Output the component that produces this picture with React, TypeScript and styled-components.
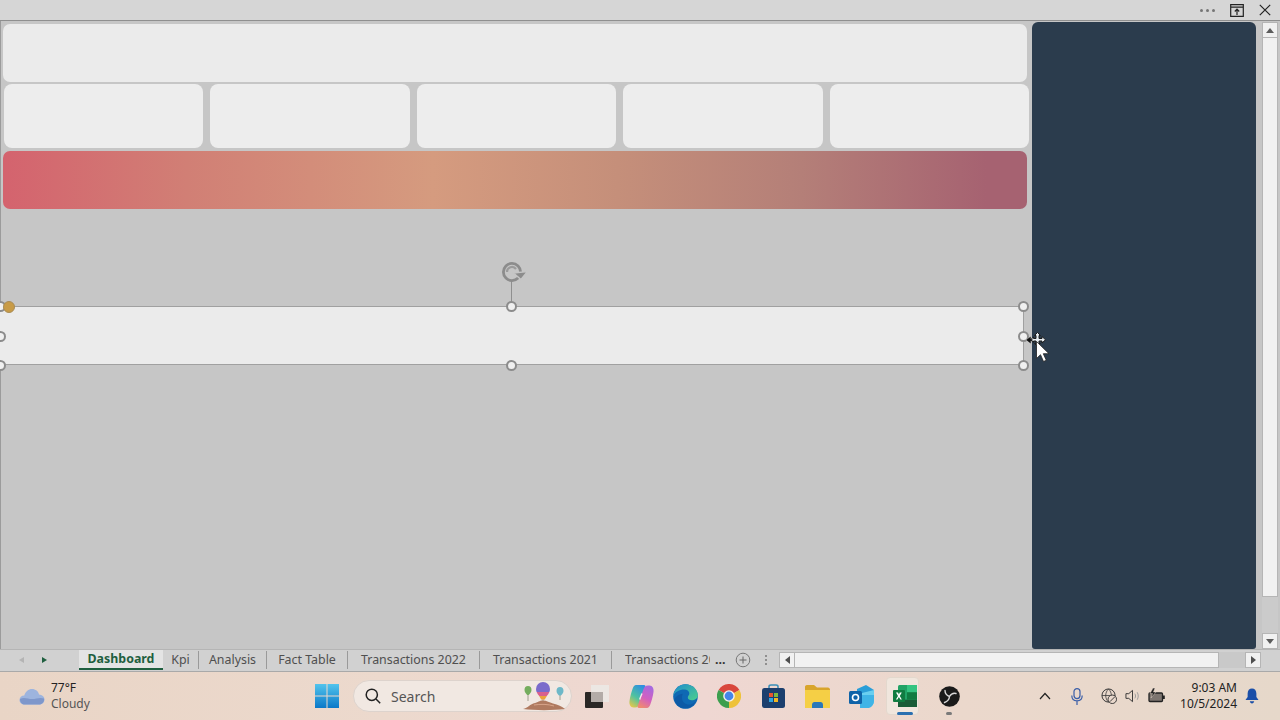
import React from "react";
import styled, { createGlobalStyle } from "styled-components";

const GlobalStyle = createGlobalStyle`
    html, body {
        margin: 0;
        padding: 0;
        background: #c6c6c6;
    }
    body {
        font-family: "Noto Sans", "Open Sans", sans-serif;
        overflow: hidden;
    }
`;

const tabs = [
    { label: "Kpi", width: 36 },
    { label: "Analysis", width: 68 },
    { label: "Fact Table", width: 81 },
    { label: "Transactions 2022", width: 132 },
    { label: "Transactions 2021", width: 132 },
];

const handles = [
    { x: "511px", y: "-2px" },
    { x: "1023px", y: "-2px" },
    { x: "1023px", y: "28px" },
    { x: "1023px", y: "57px" },
    { x: "511px", y: "57px" },
    { x: "0px", y: "28px" },
    { x: "0px", y: "57px" },
    { x: "0px", y: "-2px" },
];

const App: React.FC = (): React.ReactElement => {
    return (
        <Window>
            <GlobalStyle />
            <TitleBar>
                <TitleDots>
                    <i />
                    <i />
                    <i />
                </TitleDots>
                <TitleIcon width="14" height="13" viewBox="0 0 14 13">
                    <path d="M.7.7h12.6v11.6H.7zM.7 3.2h12.6" fill="none" stroke="#222" strokeWidth="1.2" />
                    <path d="M7 11V5.500M4.800 7.500 7 5.200l2.200 2.300" fill="none" stroke="#222" strokeWidth="1.2" />
                </TitleIcon>
                <TitleIcon width="12" height="12" viewBox="0 0 12 12">
                    <path d="M.8.8l10.4 10.4M11.2.8.8 11.2" fill="none" stroke="#222" strokeWidth="1.2" />
                </TitleIcon>
            </TitleBar>
            <Workspace>
                <Canvas>
                    <HeaderCard />
                    <CardRow>
                        <KpiCard />
                        <KpiCard />
                        <KpiCard />
                        <KpiCard />
                        <KpiCard />
                    </CardRow>
                    <Banner />
                    <Selected>
                        <RotateStem />
                        <RotateIcon width="28" height="24" viewBox="0 0 28 24">
                            <circle cx="11" cy="12" r="8.600" fill="none" stroke="#8c8c8c" strokeWidth="2.800" />
                            <path d="M6 12a5 5 0 0 1 9-3" fill="none" stroke="#9b9b9b" strokeWidth="2.200" />
                            <path d="M12.500 13l14-1.500-6.500 8z" fill="#8c8c8c" stroke="#c6c6c6" strokeWidth="1.400" />
                        </RotateIcon>
                        {handles.map((h) => (
                            <Grip key={h.x + h.y} $x={h.x} $y={h.y} />
                        ))}
                        <Adjust />
                    </Selected>
                    <Cursor width="26" height="36" viewBox="0 0 26 36">
                        <path
                            d="M10.500.5l3 3H12v3h3V4.500l3.500 3.300L15 11V9h-3v2.500h1.500l-3 3-3-3H9V9H6.500v1.500l-3-2.700 3-2.800v1.500H9v-3H7.500z"
                            fill="#e8eef2"
                            stroke="#1d1d1d"
                            strokeWidth="1"
                        />
                        <path d="M.5 8h5M.5 8l2.500-2v4z" stroke="#111" strokeWidth="1.400" fill="#111" />
                        <path d="M9.500 9.500v17l4-3.800 3 6.800 2.800-1.200-3-6.600h5.700z" fill="#fff" stroke="#222" strokeWidth=".8" />
                    </Cursor>
                </Canvas>
                <SidePanel />
                <VScroll>
                    <ScrollButton>
                        <UpArrow />
                    </ScrollButton>
                    <VThumb />
                    <VTrack />
                    <ScrollButton>
                        <DownArrow />
                    </ScrollButton>
                </VScroll>
            </Workspace>
            <TabStrip>
                <TabNav>
                    <NavArrow $off />
                    <NavArrow />
                </TabNav>
                <ActiveTab>Dashboard</ActiveTab>
                {tabs.map((tab) => (
                    <Tab key={tab.label} $width={tab.width}>
                        {tab.label}
                    </Tab>
                ))}
                <ClippedTab>
                    <ClippedLabel>Transactions 20</ClippedLabel>
                    <More>...</More>
                </ClippedTab>
                <AddTab width="16" height="16" viewBox="0 0 16 16">
                    <circle cx="8" cy="8" r="6.800" fill="none" stroke="#777" strokeWidth="1" />
                    <path d="M8 4.500v7M4.500 8h7" stroke="#666" strokeWidth="1" />
                </AddTab>
                <Splitter>
                    <i />
                    <i />
                    <i />
                </Splitter>
                <HScroll>
                    <HButton>
                        <LeftArrow />
                    </HButton>
                    <HThumb />
                    <HTrack />
                    <HButton>
                        <RightArrow />
                    </HButton>
                </HScroll>
            </TabStrip>
            <Taskbar>
                <Weather>
                    <svg width="26" height="18" viewBox="0 0 26 18">
                        <path
                            d="M6 17.500C2.500 17.500.5 15.500.5 13c0-2.500 2-4.500 4.800-4.500C6.500 4.500 9.500 2 13 2c3.600 0 6.300 2.300 7 5.500 3 .3 5.500 2.300 5.500 5 0 3-2.500 5-5.500 5z"
                            fill="#9db4de"
                        />
                        <path d="M1 12c4-2.500 8 0 12 0s8-2 12-.5c.6 3.500-2 6-5 6H6c-3 0-5-2-5-5.500z" fill="#7e97cb" />
                    </svg>
                    <WeatherText>
                        <strong>77°F</strong>
                        <span>Cloudy</span>
                    </WeatherText>
                </Weather>
                <StartIcon width="24" height="24" viewBox="0 0 24 24">
                    <defs>
                        <linearGradient id="win" x1="0" y1="0" x2="0" y2="1">
                            <stop offset="0" stopColor="#52c4ec" />
                            <stop offset="1" stopColor="#0a78c8" />
                        </linearGradient>
                    </defs>
                    <path d="M0 0h11.500v11.500H0zM12.500 0H24v11.500H12.500zM0 12.500h11.500V24H0zM12.500 12.500H24V24H12.500z" fill="url(#win)" />
                </StartIcon>
                <SearchBox>
                    <svg width="16" height="16" viewBox="0 0 16 16">
                        <circle cx="6.800" cy="6.800" r="5.600" fill="none" stroke="#222" strokeWidth="1.500" />
                        <path d="M11 11l4.200 4.200" stroke="#222" strokeWidth="1.500" />
                    </svg>
                    <SearchLabel>Search</SearchLabel>
                    <Balloons width="46" height="30" viewBox="0 0 46 30">
                        <path d="M7 12v8M22 15v5M39 13v6" stroke="#8a8a7a" strokeWidth=".8" />
                        <path d="M2 28c5-1 7-5 12-6 3-.6 4-2.500 8-2.500s6 2 10 3c5 1 9 3 12 5.500-12 1.500-30 1.500-42 0z" fill="#b07a60" />
                        <path d="M13 24c6-1 14-1 20 1" fill="none" stroke="#d8a48a" strokeWidth="1" />
                        <path d="M3.500 9a3.500 4 0 0 1 7 0c0 2.500-2 4-2.800 5H6.300c-.8-1-2.800-2.500-2.800-5z" fill="#74ad5e" />
                        <path d="M15 8a7 7 0 0 1 14 0c0 1-.2 2-.6 3H15.600C15.200 10 15 9 15 8z" fill="#7a6bcb" />
                        <path d="M15.600 11h12.800c-.8 2-2 3-2.600 4h-7.600c-.6-1-1.800-2-2.600-4z" fill="#d9608e" />
                        <path d="M18.200 15h7.600l-2 3.500h-3.600z" fill="#eda23c" />
                        <path d="M35.500 10a3.500 4 0 0 1 7 0c0 2.200-1.800 3.500-2.500 4.500h-2c-.7-1-2.500-2.300-2.500-4.500z" fill="#6db8c8" />
                    </Balloons>
                </SearchBox>
                <AppIcons>
                    <AppSlot>
                        <svg width="24" height="23" viewBox="0 0 24 23">
                            <rect x="6" y="0" width="18" height="17" fill="#ece7e3" />
                            <rect x="0" y="7" width="18" height="16" rx="1" fill="#2a2826" />
                            <rect x="6" y="7" width="12" height="10" fill="#b3aca8" />
                        </svg>
                    </AppSlot>
                    <AppSlot>
                        <svg width="25" height="23" viewBox="0 0 25 23">
                            <defs>
                                <linearGradient id="copL" x1="0.700" y1="0" x2="0.200" y2="1">
                                    <stop offset="0" stopColor="#2f8fe0" />
                                    <stop offset=".55" stopColor="#4fc2a0" />
                                    <stop offset="1" stopColor="#e4c84a" />
                                </linearGradient>
                                <linearGradient id="copR" x1="0.700" y1="0" x2="0.300" y2="1">
                                    <stop offset="0" stopColor="#a56ae0" />
                                    <stop offset=".55" stopColor="#d25fc0" />
                                    <stop offset="1" stopColor="#ef8a70" />
                                </linearGradient>
                            </defs>
                            <path d="M7 0h8c1.500 0 1.800 1 1.200 2.500L10.800 18c-.8 2.500-2 4.500-4.800 4.500H4.500C1.500 22.500 0 19.500.5 16 1 12 2.500 7 3.700 3.500 4.500 1.200 5.500 0 7 0z" fill="url(#copL)" />
                            <path d="M18 23h-8c-1.500 0-1.800-1-1.200-2.500L14.200 5c.8-2.500 2-4.500 4.800-4.500h1.500c3 0 4.500 3 4 6.500-.5 4-2 9-3.200 12.500-.8 2.300-1.800 3.500-3.300 3.500z" fill="url(#copR)" />
                            <path d="M13 8.500c-.8 2-1.800 4-2.300 6" stroke="#f5e6ec" strokeWidth="1.400" fill="none" />
                        </svg>
                    </AppSlot>
                    <AppSlot>
                        <svg width="25" height="25" viewBox="0 0 25 25">
                            <defs>
                                <linearGradient id="edgeTop" x1="0" y1="0" x2="1" y2="1">
                                    <stop offset="0" stopColor="#1f8ccf" />
                                    <stop offset="1" stopColor="#4cd08c" />
                                </linearGradient>
                            </defs>
                            <circle cx="12.500" cy="12.500" r="12.300" fill="#0f69b4" />
                            <path d="M.4 11.500C1.500 4.500 6.500.2 12.500.2c7 0 12.300 5 12.300 11 0 3.300-3 5-6 5-2.200 0-4-1-4-2.700 0-1.800 1.500-2.200 1.500-4C16.300 7 14 5.500 11 5.500 6.500 5.500 2 8 .4 11.500z" fill="url(#edgeTop)" />
                            <path d="M9 14c0 3.800 3.200 6.600 7 6.600 2.300 0 4.500-.9 6.500-2.800-1.500 3.500-5 6.400-10 6.400-5.500 0-10-3.500-11-8.500.8-3 4-5.500 8.300-6-.6 1-.8 2.800-.8 4.300z" fill="#0d5aa6" />
                        </svg>
                    </AppSlot>
                    <AppSlot>
                        <svg width="24" height="24" viewBox="0 0 24 24">
                            <path d="M12 12 1.600 6A12 12 0 0 1 22.400 6z" fill="#d9473c" />
                            <path d="M12 12 1.600 6A12 12 0 0 0 12 24z" fill="#3c9f4e" />
                            <path d="M12 12 12 24A12 12 0 0 0 22.400 6z" fill="#eec23a" />
                            <circle cx="12" cy="12" r="5.800" fill="#f6f2ee" />
                            <circle cx="12" cy="12" r="4.400" fill="#4586e8" />
                        </svg>
                    </AppSlot>
                    <AppSlot>
                        <svg width="25" height="24" viewBox="0 0 25 24">
                            <path d="M8 4V2.500C8 1.500 9 1 10 1h5c1 0 2 .5 2 1.500V4" fill="none" stroke="#3a8fb8" strokeWidth="1.500" />
                            <rect x="1" y="4" width="23" height="20" rx="2.500" fill="#1c3f6e" />
                            <path d="M8 9h4v4H8z" fill="#e8552f" />
                            <path d="M13 9h4v4h-4z" fill="#7db93d" />
                            <path d="M8 14h4v4H8z" fill="#2fa6e0" />
                            <path d="M13 14h4v4h-4z" fill="#f4b622" />
                        </svg>
                    </AppSlot>
                    <AppSlot>
                        <svg width="25" height="23" viewBox="0 0 25 23">
                            <path d="M0 2c0-1 .5-2 2-2h7l3 2.500h11c1 0 2 1 2 2V9H0z" fill="#d9a52c" />
                            <path d="M0 5h25v18H0z" fill="#f5cf45" />
                            <path d="M7 20c0-2 1-3 2.500-3h6c1.500 0 2.500 1 2.500 3v3H7z" fill="#2a78b8" />
                        </svg>
                    </AppSlot>
                    <AppSlot>
                        <svg width="25" height="23" viewBox="0 0 25 23">
                            <path d="M8 4l9-4 8 5-3 5H8z" fill="#2a9ed8" />
                            <path d="M13 8l12-3v11c0 3-2 5-4 6l-8-2z" fill="#69cff0" />
                            <path d="M11 10h14v6c0 3-2 6-5 7H11z" fill="#3fb4e6" />
                            <rect x="0" y="6" width="13" height="13" rx="1.500" fill="#0f63a8" />
                            <circle cx="6.500" cy="12.500" r="3" fill="none" stroke="#fff" strokeWidth="1.600" />
                        </svg>
                    </AppSlot>
                    <ExcelSlot>
                        <svg width="24" height="24" viewBox="0 0 24 24">
                            <rect x="5" y="1" width="19" height="22" rx="1.500" fill="#21a366" />
                            <rect x="14" y="1" width="10" height="7.300" fill="#33c481" />
                            <rect x="5" y="15.700" width="19" height="7.300" fill="#185c37" />
                            <rect x="14" y="8.300" width="10" height="7.400" fill="#107c41" />
                            <rect x="0" y="6" width="12" height="12" rx="1" fill="#107c41" />
                            <path d="M3 8.500l2 3.400-2.100 3.600h1.500l1.500-2.600 1.500 2.600h1.500l-2.100-3.600 2-3.400H6.800l-.9 2-.9-2z" fill="#fff" />
                        </svg>
                        <ActiveMark />
                    </ExcelSlot>
                    <AppSlot>
                        <svg width="21" height="21" viewBox="0 0 21 21">
                            <circle cx="10.500" cy="10.500" r="10.300" fill="#1a1a1a" />
                            <path d="M10.500 10.500C12 8 14.500 6.800 17 7.500M10.500 10.500C8 9.500 6 7.500 6 4.500M10.500 10.500C10.300 13 8.500 15.500 5.500 16.500" fill="none" stroke="#d9d9d9" strokeWidth="1.400" strokeLinecap="round" />
                        </svg>
                        <RunningMark />
                    </AppSlot>
                </AppIcons>
                <Tray>
                    <Chevron width="12" height="8" viewBox="0 0 12 8">
                        <path d="M1 7l5-5.500L11 7" fill="none" stroke="#222" strokeWidth="1.200" />
                    </Chevron>
                    <MicIcon width="12" height="17" viewBox="0 0 12 17">
                        <rect x="3" y=".6" width="6" height="10" rx="3" fill="none" stroke="#3a5ea8" strokeWidth="1.200" />
                        <path d="M.8 7.500c0 3.500 2.200 5.300 5.200 5.300s5.200-1.800 5.200-5.300M6 12.800V17" fill="none" stroke="#3a5ea8" strokeWidth="1.200" />
                    </MicIcon>
                    <TrayGroup>
                        <svg width="16" height="16" viewBox="0 0 17 17">
                            <circle cx="8" cy="8" r="7" fill="none" stroke="#333" strokeWidth="1" />
                            <path d="M1 8h14M8 1c-4 4-4 10 0 14M8 1c4 4 4 10 0 14" fill="none" stroke="#333" strokeWidth=".8" />
                            <circle cx="12" cy="12" r="4.500" fill="#e9d8cc" stroke="#333" strokeWidth="1" />
                            <path d="M9.500 14.500l5-5" stroke="#333" strokeWidth="1" />
                        </svg>
                        <svg width="15" height="14" viewBox="0 0 16 14">
                            <path d="M1 4.500h3L8 1v12L4 9.500H1z" fill="none" stroke="#333" strokeWidth="1" />
                            <path d="M10.500 4.500c1 1.500 1 3.500 0 5M13 3c1.500 2.500 1.500 5.500 0 8" fill="none" stroke="#999" strokeWidth="1" />
                        </svg>
                        <svg width="17" height="16" viewBox="0 0 17 16">
                            <rect x="1" y="5" width="13.500" height="8.500" rx="1" fill="#7d7570" stroke="#222" strokeWidth="1.300" />
                            <rect x="15" y="7.500" width="1.800" height="3.500" fill="#222" />
                            <path d="M5 0 2 5.500h2.500L3 10l5-6H5.500L7 0z" fill="#222" stroke="#e9d8cc" strokeWidth=".5" />
                        </svg>
                    </TrayGroup>
                </Tray>
                <Clock>
                    <span>9:03 AM</span>
                    <span>10/5/2024</span>
                </Clock>
                <Bell width="14" height="16" viewBox="0 0 16 17">
                    <path d="M8 0c3 0 5 2.300 5 5.500v4l2.500 3.500H.5L3 9.500v-4C3 2.300 5 0 8 0zM5.500 14.500h5C10.200 16 9.300 17 8 17s-2.200-1-2.500-2.500z" fill="#1b4fa8" />
                </Bell>
            </Taskbar>
        </Window>
    );
};

export default App;

const Window = styled.div`
    width: 1280px;
    height: 720px;
    display: flex;
    flex-direction: column;
    overflow: hidden;
    background: #c6c6c6;
`;

const TitleBar = styled.div`
    height: 21px;
    flex: none;
    display: flex;
    align-items: center;
    justify-content: flex-end;
    gap: 15px;
    padding-right: 9px;
    box-sizing: border-box;
    background: #d6d6d6;
    border-bottom: 1px solid #8f8f8f;
`;

const TitleDots = styled.div`
    display: flex;
    gap: 3px;
    i {
        width: 3px;
        height: 3px;
        border-radius: 50%;
        background: #757575;
    }
`;

const TitleIcon = styled.svg`
    display: block;
`;

const Workspace = styled.div`
    height: 628px;
    flex: none;
    display: flex;
    background: #c6c6c6;
`;

const Canvas = styled.div`
    width: 1032px;
    flex: none;
    position: relative;
    box-sizing: border-box;
    padding: 3px 0 0 3px;
    border-left: 1px solid #9b9b9b;
`;

const HeaderCard = styled.div`
    width: 1024px;
    height: 58px;
    margin-left: -1px;
    background: #ebebeb;
    border-radius: 7px;
`;

const CardRow = styled.div`
    display: grid;
    grid-template-columns: repeat(5, 199.300px);
    column-gap: 7.200px;
    margin-top: 2px;
`;

const KpiCard = styled.div`
    height: 64px;
    background: #ededed;
    border-radius: 8px;
`;

const Banner = styled.div`
    width: 1024px;
    height: 58px;
    margin: 3px 0 0 -1px;
    border-radius: 7px;
    background: linear-gradient(
        90deg,
        #d4636e 0%,
        #d17f75 18%,
        #d59b7f 42%,
        #c58f7a 60%,
        #b47f78 78%,
        #a66271 96%
    );
`;

const Selected = styled.div`
    position: relative;
    width: 1024px;
    height: 59px;
    margin: 97px 0 0 -4px;
    box-sizing: border-box;
    background: #ebebeb;
    border-top: 1px solid #a0a0a0;
    border-bottom: 1px solid #a0a0a0;
    border-right: 1px solid #a0a0a0;
`;

const Grip = styled.span<{ $x: string; $y: string }>`
    position: absolute;
    left: ${(p) => p.$x};
    top: ${(p) => p.$y};
    width: 7px;
    height: 7px;
    margin: -4px 0 0 -5px;
    border: 2px solid #8c8c8c;
    border-radius: 50%;
    background: #f0f0f0;
`;

const Adjust = styled.span`
    position: absolute;
    left: 3px;
    top: -6px;
    width: 10px;
    height: 10px;
    border-radius: 50%;
    background: #c89b46;
    border: 1px solid #a98c55;
`;

const RotateStem = styled.span`
    position: absolute;
    left: 511px;
    top: -26px;
    width: 1px;
    height: 26px;
    background: #8f8f8f;
`;

const RotateIcon = styled.svg`
    position: absolute;
    left: 501px;
    top: -47px;
`;

const Cursor = styled.svg`
    position: absolute;
    left: 1026px;
    top: 311px;
`;

const SidePanel = styled.div`
    width: 224px;
    height: 627px;
    margin-top: 1px;
    flex: none;
    background: #2b3c4d;
    border-radius: 6px 6px 3px 3px;
`;

const VScroll = styled.div`
    width: 16px;
    margin: 1px 2px 0 6px;
    display: flex;
    flex-direction: column;
`;

const ScrollButton = styled.div`
    height: 16px;
    flex: none;
    display: flex;
    align-items: center;
    justify-content: center;
    background: #f1f1f1;
    border: 1px solid #b5b5b5;
    box-sizing: border-box;
`;

const UpArrow = styled.span`
    border: 4px solid transparent;
    border-top: 0;
    border-bottom: 5px solid #5c5c5c;
`;

const DownArrow = styled.span`
    border: 4px solid transparent;
    border-bottom: 0;
    border-top: 5px solid #5c5c5c;
`;

const VThumb = styled.div`
    height: 559px;
    flex: none;
    background: #f1f1f1;
    border: 1px solid #b5b5b5;
    border-top: 0;
    box-sizing: border-box;
`;

const VTrack = styled.div`
    flex: 1;
    background: #cbcbcb;
`;

const TabStrip = styled.div`
    height: 23px;
    flex: none;
    display: flex;
    align-items: center;
    box-sizing: border-box;
    padding-bottom: 1px;
    background: #d1d1d1;
    border-top: 1px solid #b5b5b5;
    border-bottom: 1px solid #a9a9a9;
    font-size: 12.400px;
    color: #4f4f4f;
`;

const TabNav = styled.div`
    width: 79px;
    flex: none;
    display: flex;
    gap: 18px;
    padding-left: 19px;
    box-sizing: border-box;
`;

const NavArrow = styled.span<{ $off?: boolean }>`
    border: 3.500px solid transparent;
    border-right: 0;
    border-left: 5px solid ${(p) => (p.$off ? "transparent" : "#1f5f3f")};
    ${(p) => p.$off && "border-left: 0; border-right: 5px solid #b4b4b4;"}
`;

const ActiveTab = styled.div`
    width: 84px;
    height: 20px;
    margin-top: -1px;
    flex: none;
    display: flex;
    align-items: center;
    justify-content: center;
    box-sizing: border-box;
    background: #e4e4e4;
    color: #1f5f3f;
    font-weight: 700;
    border-bottom: 2px solid #1f5f3f;
`;

const Tab = styled.div<{ $width: number }>`
    width: ${(p) => p.$width}px;
    height: 18px;
    flex: none;
    display: flex;
    align-items: center;
    justify-content: center;
    box-sizing: border-box;
    padding-bottom: 2px;
    border-right: 1px solid #9a9a9a;
    white-space: nowrap;
`;

const ClippedTab = styled.div`
    width: 123px;
    flex: none;
    display: flex;
    align-items: center;
    padding: 0 0 2px 13px;
    box-sizing: border-box;
`;

const ClippedLabel = styled.span`
    width: 85px;
    flex: none;
    overflow: hidden;
    white-space: nowrap;
`;

const More = styled.span`
    margin-left: 5px;
    font-weight: 700;
    color: #333;
`;

const AddTab = styled.svg`
    flex: none;
`;

const Splitter = styled.div`
    display: flex;
    flex-direction: column;
    gap: 2px;
    margin-left: 14px;
    margin-right: 12px;
    i {
        width: 2px;
        height: 2px;
        background: #8f8f8f;
    }
`;

const HScroll = styled.div`
    width: 482px;
    height: 16px;
    flex: none;
    display: flex;
`;

const HButton = styled.div`
    width: 16px;
    flex: none;
    display: flex;
    align-items: center;
    justify-content: center;
    box-sizing: border-box;
    background: #f1f1f1;
    border: 1px solid #b5b5b5;
`;

const LeftArrow = styled.span`
    border: 4px solid transparent;
    border-left: 0;
    border-right: 5px solid #4f4f4f;
`;

const RightArrow = styled.span`
    border: 4px solid transparent;
    border-right: 0;
    border-left: 5px solid #4f4f4f;
`;

const HThumb = styled.div`
    width: 424px;
    flex: none;
    background: #f1f1f1;
    border-top: 1px solid #b5b5b5;
    border-bottom: 1px solid #b5b5b5;
    border-right: 1px solid #b5b5b5;
    box-sizing: border-box;
`;

const HTrack = styled.div`
    flex: 1;
    background: #c9c9c9;
`;

const Taskbar = styled.div`
    height: 48px;
    flex: none;
    display: flex;
    align-items: center;
    box-sizing: border-box;
    padding-left: 19px;
    color: #222;
    background: linear-gradient(90deg, #e9d5c6 0%, #ecd9cd 30%, #efd7d2 55%, #ebd8cc 75%, #e6d8ca 100%);
`;

const Weather = styled.div`
    width: 296px;
    flex: none;
    display: flex;
    align-items: center;
    gap: 6px;
`;

const WeatherText = styled.div`
    display: flex;
    flex-direction: column;
    font-size: 12px;
    line-height: 16px;
    strong {
        font-weight: 400;
    }
    span {
        color: #555;
    }
`;

const StartIcon = styled.svg`
    flex: none;
`;

const SearchBox = styled.div`
    width: 219px;
    height: 32px;
    flex: none;
    display: flex;
    align-items: center;
    margin-left: 14px;
    padding-left: 11px;
    box-sizing: border-box;
    border-radius: 16px;
    background: #f1e8e2;
    border: 1px solid #ddd3cd;
`;

const SearchLabel = styled.span`
    flex: 1;
    margin-left: 10px;
    font-size: 14px;
    color: #555;
`;

const Balloons = styled.svg`
    flex: none;
    margin-right: 4px;
`;

const AppIcons = styled.div`
    display: flex;
    align-items: center;
    margin-left: 3px;
`;

const AppSlot = styled.div`
    position: relative;
    width: 44px;
    height: 48px;
    flex: none;
    display: flex;
    align-items: center;
    justify-content: center;
`;

const ExcelSlot = styled(AppSlot)`
    &::before {
        content: "";
        position: absolute;
        left: 3px;
        top: 5px;
        width: 33px;
        height: 38px;
        box-sizing: border-box;
        border-radius: 4px;
        background: #f0e6dd;
        border: 1px solid #e3d8cd;
    }
    svg {
        position: relative;
    }
`;

const ActiveMark = styled.span`
    position: absolute;
    left: 14px;
    bottom: 5px;
    width: 16px;
    height: 3px;
    border-radius: 2px;
    background: #2a6fb0;
`;

const RunningMark = styled.span`
    position: absolute;
    left: 19px;
    bottom: 5px;
    width: 6px;
    height: 3px;
    border-radius: 2px;
    background: #7a7a7a;
`;

const Tray = styled.div`
    display: flex;
    align-items: center;
    margin-left: 68px;
    gap: 18px;
`;

const Chevron = styled.svg`
    flex: none;
    margin-right: 2px;
`;

const MicIcon = styled.svg`
    flex: none;
`;

const TrayGroup = styled.div`
    display: flex;
    align-items: center;
    gap: 8px;
`;

const Clock = styled.div`
    width: 56px;
    flex: none;
    display: flex;
    flex-direction: column;
    align-items: flex-end;
    margin-left: 16px;
    font-size: 12px;
    line-height: 16px;
    white-space: nowrap;
    color: #222;
`;

const Bell = styled.svg`
    flex: none;
    margin-left: 8px;
`;
